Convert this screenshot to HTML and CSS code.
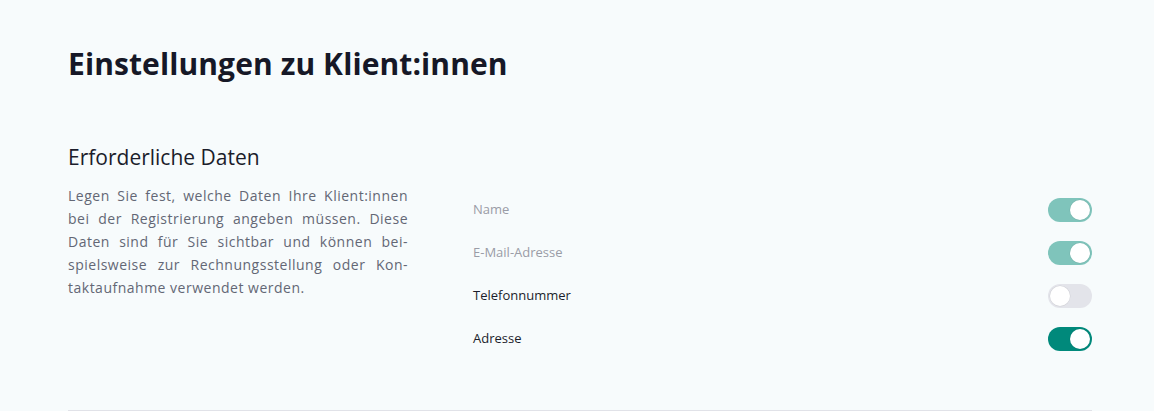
FILE: index.html
```html
<!DOCTYPE html>
<html lang="de">
<head>
<meta charset="utf-8">
<title>Einstellungen zu Klient:innen</title>
<link rel="stylesheet" href="styles.css">
</head>
<body>
<main class="page">
  <h1 class="page-title">Einstellungen zu Klient:innen</h1>
  <section class="settings-section">
    <div class="section-info">
      <h2 class="section-title">Erforderliche Daten</h2>
      <p class="section-text">
        <span class="line">Legen Sie fest, welche Daten Ihre Klient:innen</span>
        <span class="line">bei der Registrierung angeben müssen. Diese</span>
        <span class="line">Daten sind für Sie sichtbar und können bei-</span>
        <span class="line">spielsweise zur Rechnungsstellung oder Kon-</span>
        <span class="line is-last">taktaufnahme verwendet werden.</span>
      </p>
    </div>
    <ul class="field-list">
      <li class="field-row is-disabled">
        <span class="field-label">Name</span>
        <span class="toggle is-on"><span class="toggle-knob"></span></span>
      </li>
      <li class="field-row is-disabled">
        <span class="field-label">E-Mail-Adresse</span>
        <span class="toggle is-on"><span class="toggle-knob"></span></span>
      </li>
      <li class="field-row">
        <span class="field-label">Telefonnummer</span>
        <span class="toggle"><span class="toggle-knob"></span></span>
      </li>
      <li class="field-row">
        <span class="field-label">Adresse</span>
        <span class="toggle is-on"><span class="toggle-knob"></span></span>
      </li>
    </ul>
  </section>
</main>
</body>
</html>
```

FILE: styles.css
```css
html, body {
  margin: 0;
  padding: 0;
  background: #f7fbfc;
}
body {
  font-family: "Open Sans", "Noto Sans", sans-serif;
  color: #1b1d2b;
}
.page {
  width: 1024px;
  margin-left: 68px;
  padding-top: 44px;
}
.page-title {
  margin: 0;
  font-size: 30px;
  line-height: 40px;
  font-weight: 700;
  letter-spacing: 0.1px;
  color: #161827;
}
.settings-section {
  display: flex;
  margin-top: 59px;
  padding-bottom: 59px;
  border-bottom: 1px solid #e1e2e8;
}
.section-info {
  width: 340px;
  flex: none;
}
.section-title {
  margin: 0;
  font-size: 21px;
  line-height: 28px;
  font-weight: 400;
  color: #1b1d2b;
}
.section-text {
  margin: 13px 0 0;
  font-size: 14px;
  line-height: 23px;
  letter-spacing: 0.5px;
  color: #636775;
}
.line {
  display: block;
  text-align: justify;
  text-align-last: justify;
  white-space: nowrap;
}
.line.is-last {
  text-align: left;
  text-align-last: left;
}
.field-list {
  list-style: none;
  margin: 0;
  padding: 0;
  margin-left: 65px;
  padding-top: 55px;
  flex: 1;
  display: flex;
  flex-direction: column;
  gap: 19px;
}
.field-row {
  display: flex;
  align-items: center;
  justify-content: space-between;
  height: 24px;
}
.field-label {
  font-size: 13px;
  margin-top: -3px;
  color: #1b1d2b;
}
.is-disabled .field-label {
  color: #9a9ca6;
}
.toggle {
  width: 44px;
  height: 24px;
  border-radius: 12px;
  background: #e3e4ea;
  box-sizing: border-box;
  padding: 2px;
  display: flex;
}
.toggle-knob {
  width: 20px;
  height: 20px;
  border-radius: 50%;
  background: #ffffff;
  box-shadow: 0 0 0 0.5px rgba(0,0,0,0.08);
}
.toggle.is-on {
  background: #00897b;
  justify-content: flex-end;
}
.is-disabled .toggle.is-on {
  background: #7fc4bb;
}
```
